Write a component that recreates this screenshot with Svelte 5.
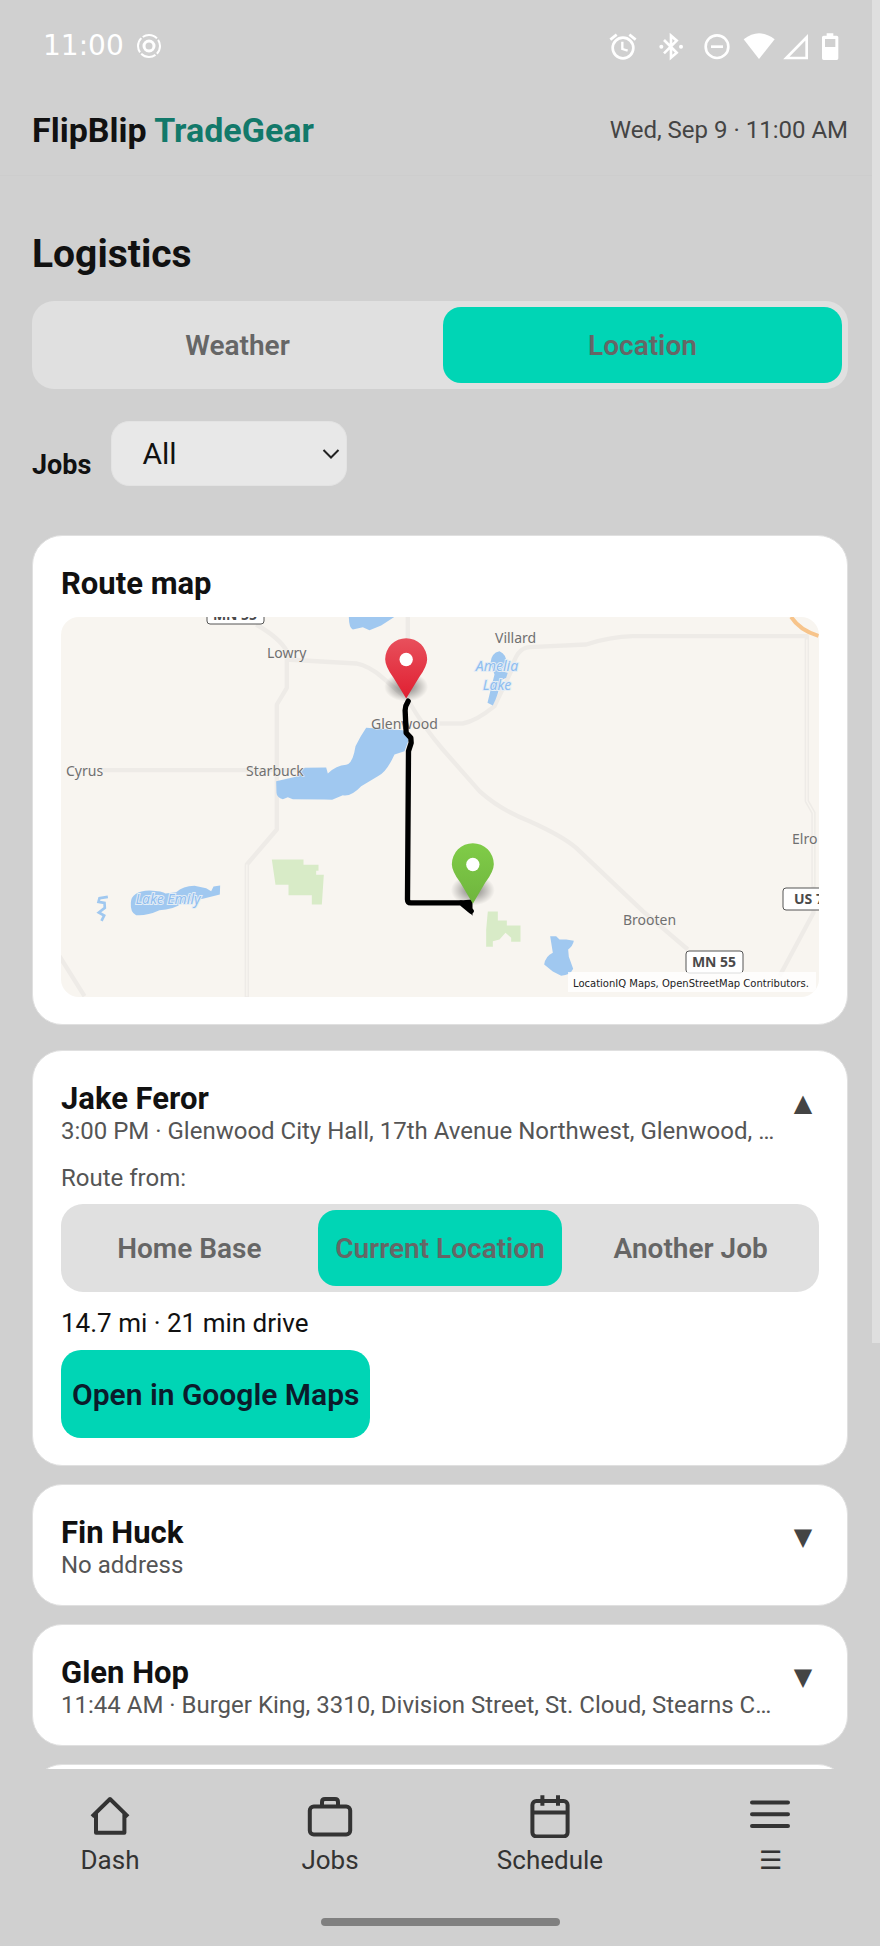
<script>
  let view = $state('Location');
  let origin = $state('Current Location');
  let filter = $state('All');
  let openJob = $state('Jake Feror');

  const views = ['Weather', 'Location'];
  const origins = ['Home Base', 'Current Location', 'Another Job'];
  const jobs = [
    { name: 'Jake Feror', detail: '3:00 PM · Glenwood City Hall, 17th Avenue Northwest, Glenwood, …', route: '14.7 mi · 21 min drive' },
    { name: 'Fin Huck', detail: 'No address' },
    { name: 'Glen Hop', detail: '11:44 AM · Burger King, 3310, Division Street, St. Cloud, Stearns C…' },
    { name: '', detail: '' }
  ];
</script>

<div class="app">
  <div class="status">
    <div class="clock">
      <span>11:00</span>
      <svg width="26" height="26" viewBox="0 0 26 26" fill="none" stroke="#fff" aria-hidden="true">
        <circle cx="13" cy="13" r="11" stroke-width="2" stroke-dasharray="15.500 1.780" stroke-dashoffset="7" />
        <circle cx="13" cy="13" r="5" stroke-width="3" />
      </svg>
    </div>
    <div class="signals" aria-hidden="true">
      <svg width="36" height="30" viewBox="504 90 108 90" fill="none" stroke="#fff">
        <circle cx="549" cy="141" r="31" stroke-width="8" />
        <path d="M511 116l19-15M587 116l-19-15" stroke-width="8" />
        <path d="M547 122v22l16 5" stroke-width="7" />
      </svg>
      <svg width="38" height="30" viewBox="636 90 114 90" fill="none" stroke="#fff">
        <path d="M672 117l38 38-17 15v-66l17 15-38 38" stroke-width="8" />
        <circle cx="664" cy="137" r="6" fill="#fff" stroke="none" />
        <circle cx="723" cy="137" r="6" fill="#fff" stroke="none" />
      </svg>
      <svg width="37" height="30" viewBox="774 90 111 90" fill="none" stroke="#fff">
        <circle cx="831" cy="137" r="34" stroke-width="8" />
        <path d="M813 137h36" stroke-width="8" />
      </svg>
      <svg width="32" height="30" viewBox="909 90 96 90" fill="#fff">
        <path d="M911 115q46-36 93 0l-47 59z" />
      </svg>
      <svg width="26" height="30" viewBox="1029 90 78 90" fill="none" stroke="#fff">
        <path d="M1039 171h61v-62z" stroke-width="8" />
      </svg>
      <svg width="23" height="30" viewBox="1131 90 69 90">
        <path d="M1160 97h20v7h10q5 0 5 5v63q0 5-5 5h-39q-5 0-5-5v-63q0-5 5-5h9z" fill="#fff" />
        <path d="M1155 114h31v24h-31z" fill="#d0d0d0" />
      </svg>
    </div>
  </div>

  <header>
    <div class="brand">FlipBlip <span>TradeGear</span></div>
    <time>Wed, Sep 9 · 11:00 AM</time>
  </header>

  <main>
    <h1>Logistics</h1>
    <div class="segment">
      {#each views as v}
        <button class:active={view === v} onclick={() => (view = v)}>{v}</button>
      {/each}
    </div>

    <div class="filter">
      <label for="jobs">Jobs</label>
      <div class="select">
        <select id="jobs" bind:value={filter}>
          <option>All</option>
        </select>
        <svg width="18" height="12" viewBox="0 0 18 12" fill="none" stroke="#222" stroke-width="2" aria-hidden="true">
          <path d="M1.500 2L9 9.500 16.500 2" />
        </svg>
      </div>
    </div>

    <section class="card map">
      <h2>Route map</h2>
      <svg viewBox="0 0 758 380" role="img" aria-label="Route map">
        <defs>
          <linearGradient id="red" x1="0" y1="0" x2="0" y2="1"><stop offset="0" stop-color="#e8505c" /><stop offset="1" stop-color="#e01f31" /></linearGradient>
          <linearGradient id="green" x1="0" y1="0" x2="0" y2="1"><stop offset="0" stop-color="#80cc48" /><stop offset="1" stop-color="#6fb53e" /></linearGradient>
          <radialGradient id="shade"><stop offset="0" stop-color="#000" stop-opacity=".5" /><stop offset="1" stop-color="#000" stop-opacity="0" /></radialGradient>
        </defs>
        <rect width="758" height="380" fill="#f8f5f0" />
        <g transform="translate(-11.500 -7.500) scale(.33333)">
          <g fill="none" stroke="#eeebe7" stroke-width="13" stroke-linejoin="round">
            <path d="M620 45Q690 85 712 125V235L682 285V660L592 765V1165" />
            <path d="M710 150L920 162Q960 170 1000 205L1075 270" />
            <path d="M1075 20V270Q1120 350 1180 420L1290 545Q1350 600 1440 635Q1540 680 1580 715L1780 905L1915 1020" />
            <path d="M160 482H800M30 1040L105 1160" />
            <path d="M1170 342H1240Q1280 335 1335 290L1385 185Q1400 115 1440 113L1610 105Q1680 82 1750 80H2272V575L2292 610V910L2190 1100" />
          </g>
          <path d="M592 765V1160M2272 90V575L2292 610V830" fill="none" stroke="#f8f5f0" stroke-width="4" />
          <g fill="#a0c8f0">
            <path d="M898 20Q898 55 910 60L940 53 960 62 995 48 1035 22z" />
            <path d="M680 515L745 500 765 475 830 474 835 492Q860 468 890 466Q910 462 918 410Q930 385 950 355L1060 362 1080 385 1065 425 1035 435Q1010 490 985 500L935 530Q905 562 880 557L848 571 825 570 730 569 715 563 700 569Q682 565 681 550z" />
            <path d="M244 880Q245 845 300 843 340 845 348 852L380 848Q400 830 435 829L470 836 485 845 492 831 512 828 511 855 460 868 400 880Q370 902 330 902 290 920 260 917 242 910 244 880z" />
            <path d="M1323 160Q1325 130 1350 125 1372 135 1370 160L1355 185 1375 190 1370 205 1355 212Q1345 260 1330 288L1314 280 1325 235 1335 195z" />
            <path d="M1502 980L1520 980 1530 990 1550 990 1573 994Q1570 1010 1556 1020L1558 1042 1571 1078Q1563 1097 1535 1099L1510 1086 1484 1065Q1488 1040 1510 1030z" />
          </g>
          <path d="M175 862L150 866 147 877 165 880 166 895 148 909 164 918 156 934" fill="none" stroke="#a0c8f0" stroke-width="8" />
          <g fill="#d8ebc7">
            <path d="M667 750H762V766H807V784H800V796H823L817 885H787V857H717V826H678z" />
            <path d="M1315 906H1345V933H1372V948H1413V997H1385V985L1368 970 1350 990 1330 995V1012H1310V960z" />
          </g>
          <path d="M2225 22Q2250 62 2307 79" fill="none" stroke="#f7c48b" stroke-width="12" />
        </g>
        <g class="place">
          <text x="206" y="41">Lowry</text>
          <text x="310" y="112">Glenwood</text>
          <text x="5" y="159">Cyrus</text>
          <text x="185" y="159">Starbuck</text>
          <text x="434" y="26">Villard</text>
          <text x="731" y="227">Elro</text>
          <text x="562" y="308">Brooten</text>
        </g>
        <g class="water">
          <text x="107" y="287">Lake Emily</text>
          <text x="436" y="54">Amelia</text>
          <text x="436" y="73">Lake</text>
        </g>
        <g class="shield">
          <rect x="146" y="-15" width="57" height="22" rx="3" />
          <text x="174" y="3">MN 55</text>
          <rect x="625" y="334" width="57" height="22" rx="3" />
          <text x="653" y="350">MN 55</text>
          <rect x="722" y="271" width="57" height="22" rx="3" />
          <text x="752" y="287">US 71</text>
        </g>
        <g transform="translate(-11.500 -7.500) scale(.33333)">
          <ellipse cx="1070" cy="232" rx="66" ry="44" fill="url(#shade)" />
          <path d="M1076 275Q1066 290 1067 305L1070 370 1084 385 1085 400 1077 425 1074 870Q1074 880 1084 880H1235L1265 905" fill="none" stroke="#000" stroke-width="16" stroke-linecap="round" stroke-linejoin="round" />
          <path d="M1230 873l39-3v49z" />
          <path d="M1070 267L1032 205Q1007 170 1007 149A63 63 0 0 1 1133 149Q1133 170 1108 205z" fill="url(#red)" />
          <circle cx="1070" cy="150" r="20" fill="#fff" />
          <ellipse cx="1270" cy="842" rx="66" ry="46" fill="url(#shade)" />
          <path d="M1270 883L1233 820Q1207 785 1207 764A63 63 0 0 1 1333 764Q1333 785 1307 820z" fill="url(#green)" />
          <circle cx="1270" cy="765" r="20" fill="#fff" />
        </g>
        <rect x="507" y="355" width="248" height="20" fill="#fff" fill-opacity=".8" />
        <text class="credit" x="512" y="370">LocationIQ Maps, OpenStreetMap Contributors.</text>
      </svg>
    </section>

    <div class="jobs">
      {#each jobs as job}
        <article class="card">
          <div class="summary">
            <div class="who">
              <h2>{job.name}</h2>
              <p>{job.detail}</p>
            </div>
            <button class="toggle" aria-label="Toggle details" onclick={() => (openJob = openJob === job.name ? null : job.name)}>{openJob === job.name ? '▲' : '▼'}</button>
          </div>
          {#if openJob === job.name}
            <p class="from">Route from:</p>
            <div class="segment">
              {#each origins as o}
                <button class:active={origin === o} onclick={() => (origin = o)}>{o}</button>
              {/each}
            </div>
            <p class="distance">{job.route}</p>
            <button class="open">Open in Google Maps</button>
          {/if}
        </article>
      {/each}
    </div>
  </main>

  <footer>
    <nav>
      <a href="#dash">
        <svg viewBox="0 0 24 24" aria-hidden="true"><path d="M3 13.300L12 4.500l9 8.800M5 11.700v9.700h14.200v-9.700" /></svg>
        <span>Dash</span>
      </a>
      <a href="#jobs">
        <svg viewBox="0 0 24 24" aria-hidden="true"><rect x="1.900" y="8.300" width="20.200" height="13.900" rx="2" /><path d="M8 8V6q0-1.500 1.500-1.500h5Q16 4.500 16 6v2" /></svg>
        <span>Jobs</span>
      </a>
      <a href="#schedule">
        <svg viewBox="0 0 24 24" aria-hidden="true"><rect x="3.200" y="5.500" width="17.600" height="17.700" rx="2" /><path d="M3.200 11.200h17.600M8.200 2.600v5.300M16 2.600v5.300" /></svg>
        <span>Schedule</span>
      </a>
      <a href="#menu">
        <svg viewBox="0 0 24 24" stroke-linecap="round" aria-hidden="true"><path d="M3 6.200h18M3 12.100h18M3 18h18" /></svg>
        <span>☰</span>
      </a>
    </nav>
    <div class="handle"></div>
  </footer>
  <div class="thumb"></div>
</div>

<style>
  :global(body) { margin: 0; background: #d0d0d0; }
  .app {
    position: relative;
    display: flex;
    flex-direction: column;
    height: 100vh;
    background: #d0d0d0;
    color: #111;
    font-family: Roboto, sans-serif;
  }
  .app :where(h1, h2, p) { margin: 0; }
  button { border: 0; padding: 0; font-family: inherit; cursor: pointer; }

  .status { display: flex; justify-content: space-between; padding: 31px 40px 24px 43px; }
  .clock { display: flex; align-items: center; gap: 12px; height: 30px; color: #fff; font: 28px/30px "DejaVu Sans", sans-serif; }
  .signals { display: flex; gap: 8px; }
  .signals svg { display: block; }

  header { display: flex; align-items: center; justify-content: space-between; height: 90px; padding: 0 32px; border-bottom: 1px solid #cdcdcd; }
  .brand { font-size: 34px; font-weight: 700; }
  .brand span { color: #12796a; }
  time { font-size: 24px; color: #444; }

  main { flex: 1; min-height: 0; overflow: hidden; padding: 56px 32px 0; }
  h1 { font-size: 39px; line-height: 44px; font-weight: 700; }
  h2 { font-size: 31px; line-height: 38px; font-weight: 700; }
  h1 + .segment { margin-top: 25px; }
  .segment { display: flex; gap: 6px; padding: 6px; border-radius: 22px; background: #e0e0e0; }
  .segment button { flex: 1 1 0; height: 76px; border-radius: 18px; background: transparent; color: #666; font-size: 28px; font-weight: 600; white-space: nowrap; }
  .segment button.active { background: #00d5b5; }

  .filter { display: flex; align-items: flex-end; gap: 20px; margin-top: 32px; }
  .filter label { padding-bottom: 5px; font-size: 27px; line-height: 32px; font-weight: 700; }
  .select { position: relative; }
  select { display: block; width: 236px; height: 65px; padding: 0 30px; border: 1px solid #e3e3e3; border-radius: 18px; background: #e8e8e8; color: #111; font-family: inherit; font-size: 30px; appearance: none; }
  .select svg { position: absolute; right: 7px; top: 27px; pointer-events: none; }

  .card { box-sizing: border-box; padding: 29px 28px 27px; border: 1px solid #e0e0e0; border-radius: 30px; background: #fff; }
  .map { margin-top: 49px; }
  .map svg { display: block; width: 100%; margin-top: 14px; border-radius: 18px; }
  .place text { font: 14px "Noto Sans", sans-serif; fill: #707070; stroke: #f8f5f0; stroke-width: 1px; paint-order: stroke; }
  .water text { font: italic 14px "Noto Sans", sans-serif; fill: #8fbdf0; stroke: #e4edf5; stroke-width: 2px; paint-order: stroke; text-anchor: middle; }
  .shield rect { fill: #fff; stroke: #555; stroke-width: 1px; }
  .shield text { font: 700 14px "Noto Sans", sans-serif; fill: #4a4a4a; text-anchor: middle; }
  .credit { font: 10px "DejaVu Sans", sans-serif; fill: #222; }

  .jobs { display: flex; flex-direction: column; gap: 18px; margin-top: 25px; }
  .jobs .card { min-height: 122px; }
  .summary { display: flex; align-items: flex-start; gap: 8px; }
  .who { flex: 1; min-width: 0; }
  .who p { overflow: hidden; text-overflow: ellipsis; white-space: nowrap; }
  .who p, .from { color: #555; font-size: 24px; line-height: 28px; }
  .app .who p { line-height: 26px; }
  .toggle { width: 32px; height: 46px; background: transparent; color: #444; font: 24px/46px "DejaVu Sans", sans-serif; }
  .app .from { margin: 20px 0 12px; }
  .app .distance { margin: 16px 0 12px; font-size: 26px; line-height: 30px; }
  .open { display: block; height: 88px; padding: 0 11px; border-radius: 20px; background: #00d5b5; color: #0b1b2b; font-size: 30px; font-weight: 600; }

  footer { flex: none; padding: 21px 0 20px; background: #d0d0d0; }
  nav { display: flex; }
  nav a { flex: 1; display: flex; flex-direction: column; align-items: center; gap: 7px; color: #333; font-size: 26px; line-height: 30px; text-decoration: none; }
  nav svg { width: 48px; height: 48px; fill: none; stroke: #333; stroke-width: 2px; stroke-linejoin: round; }
  .handle { width: 239px; height: 8px; margin: 43px auto 0; border-radius: 4px; background: #808080; }
  .thumb { position: absolute; top: 0; right: 0; width: 8px; height: 69%; background: #dfdfdf; }
</style>
